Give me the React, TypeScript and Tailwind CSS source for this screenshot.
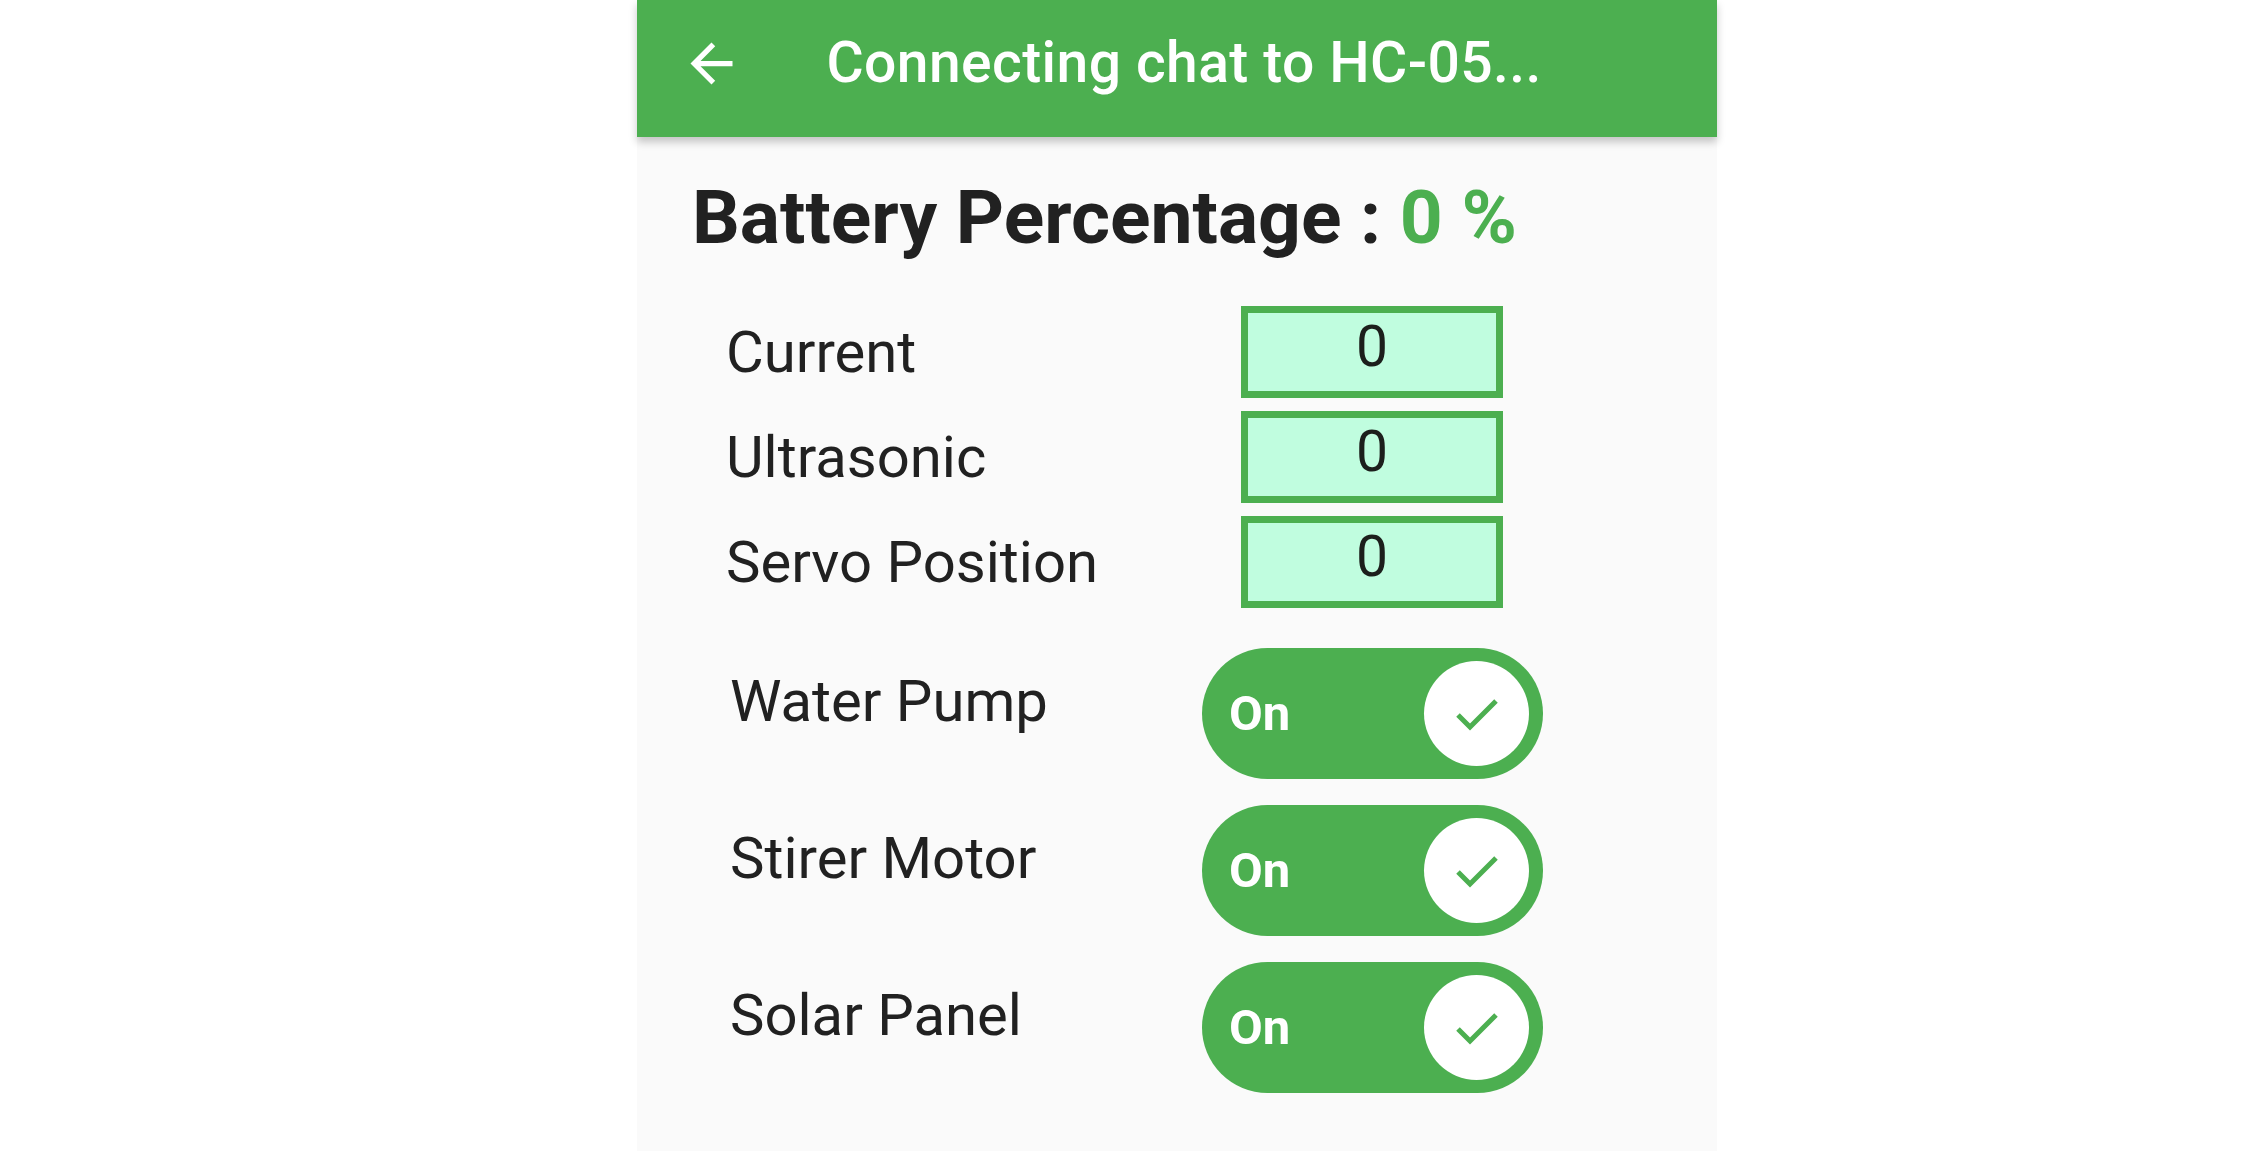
import React from "react";

const font = { fontFamily: "Roboto, 'Noto Sans', sans-serif" };

function ValueRow({ label }: { label: string }) {
  return (
    <div className="flex items-center h-[92px]">
      <div className="w-[604px] pl-[89px] text-[58px] leading-none text-[#212121]">{label}</div>
      <div className="w-[262px] h-[92px] border-[7px] border-[#4caf50] bg-[#c0fddf] flex items-start justify-center pt-[5px]">
        <span className="text-[57px] leading-none text-[#1c1f1c]">0</span>
      </div>
    </div>
  );
}

function ToggleRow({ label }: { label: string }) {
  return (
    <div className="flex items-start h-[131px]">
      <div className="w-[565px] pl-[93px] pt-[24px] text-[58px] leading-none text-[#212121]">{label}</div>
      <div className="w-[341px] h-[131px] rounded-full bg-[#4caf50] flex items-center pl-[27px] pr-[14px]">
        <span className="text-[49px] leading-none font-bold text-white">On</span>
        <div className="ml-auto w-[105px] h-[105px] rounded-full bg-white">
          <svg width="105" height="105" viewBox="0 0 105 105" fill="none">
            <path d="M34 54 L46 66 L72 40" stroke="#4caf50" strokeWidth="5" strokeLinecap="butt" strokeLinejoin="miter" />
          </svg>
        </div>
      </div>
    </div>
  );
}

export default function App() {
  return (
    <div className="w-full h-[1151px] bg-white flex overflow-hidden" style={font}>
      <div className="ml-[637px] w-[1080px] h-[1151px] bg-[#fafafa] flex flex-col">
        <div className="relative z-10 h-[137px] shrink-0 bg-[#4caf50] shadow-[0_5px_8px_rgba(0,0,0,0.22)] flex items-start pl-[42.5px]">
          <svg className="mt-[31.5px]" width="63" height="63" viewBox="0 0 24 24" fill="#ffffff">
            <path d="M20 11H7.83l5.59-5.59L12 4l-8 8 8 8 1.41-1.41L7.83 13H20v-2z" />
          </svg>
          <div className="ml-[84px] mt-[34px] text-[57px] tracking-[0.4px] leading-none font-medium text-white whitespace-nowrap">
            Connecting chat to HC-05...
          </div>
        </div>
        <div className="pl-[55px] mt-[43px] text-[75px] leading-none font-bold text-[#212121] whitespace-nowrap">
          Battery Percentage : <span className="text-[#4caf50]">0 %</span>
        </div>
        <div className="mt-[51px] flex flex-col gap-[13px]">
          <ValueRow label="Current" />
          <ValueRow label="Ultrasonic" />
          <ValueRow label="Servo Position" />
        </div>
        <div className="mt-[40px] flex flex-col gap-[26px]">
          <ToggleRow label="Water Pump" />
          <ToggleRow label="Stirer Motor" />
          <ToggleRow label="Solar Panel" />
        </div>
      </div>
    </div>
  );
}
